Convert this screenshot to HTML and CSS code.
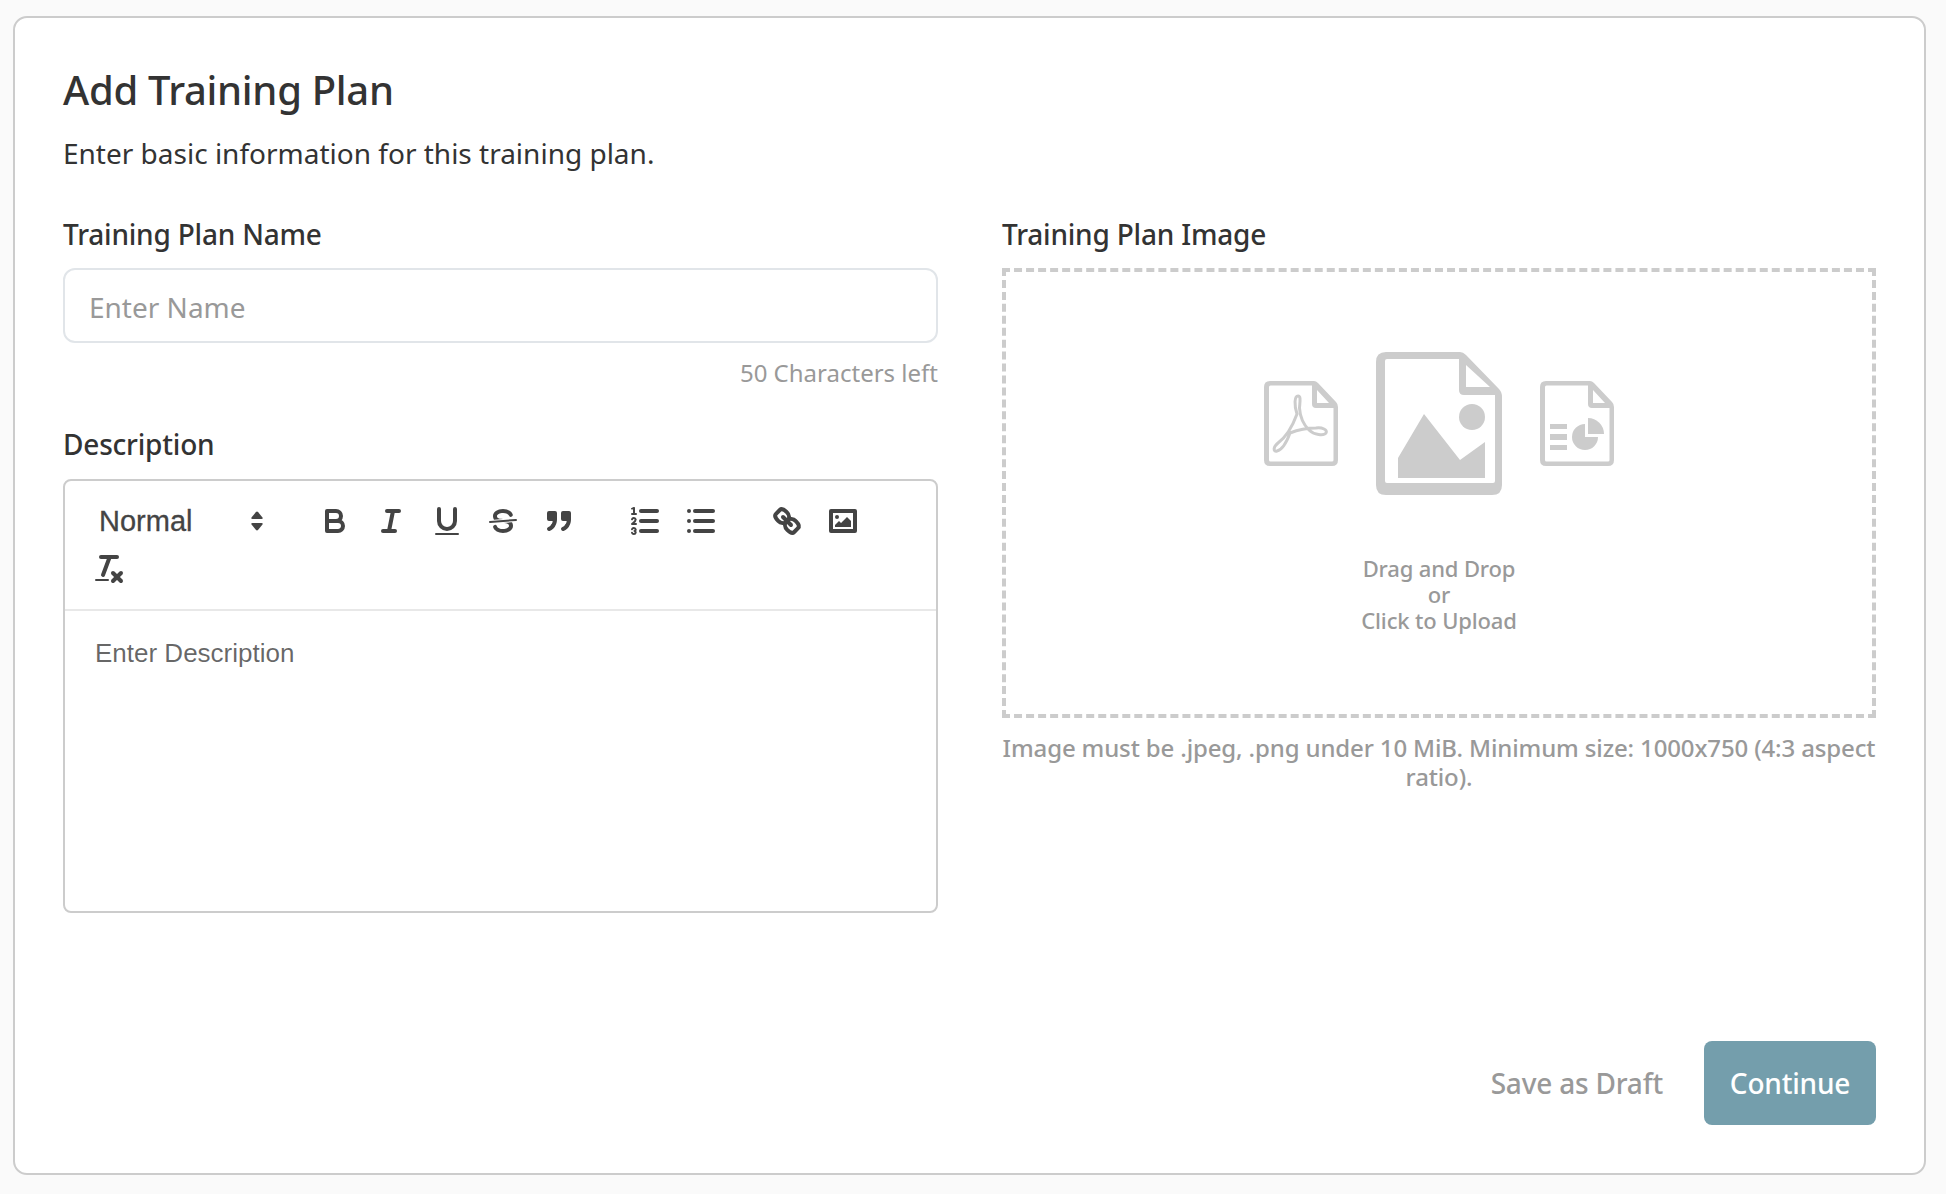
FILE: index.html
```html
<!DOCTYPE html>
<html lang="en">
<head>
    <meta charset="UTF-8">
    <title>Add Training Plan</title>
    <link rel="stylesheet" href="styles.css">
</head>
<body>
    <main class="card">
        <h1 class="title">Add Training Plan</h1>
        <p class="subtitle">Enter basic information for this training plan.</p>

        <div class="columns">
            <section class="column">
                <label class="field-label">Training Plan Name</label>
                <div class="name-input">Enter Name</div>
                <div class="counter">50 Characters left</div>

                <label class="field-label description-label">Description</label>
                <div class="editor">
                    <!-- Toolbar -->
                    <div class="toolbar">
                        <span class="formats">
                            <span class="picker">
                                <span class="picker-label">Normal</span>
                                <svg class="picker-arrows" viewBox="0 0 12 20"><path class="fill" d="M4.800 1.200Q6 -0.200 7.200 1.200L11.300 6.300Q12.500 8 10.500 8H1.500Q-0.500 8 0.700 6.300Z"/><path class="fill" d="M1.500 12H10.500Q12.500 12 11.300 13.700L7.200 18.800Q6 20.200 4.800 18.800L0.700 13.700Q-0.500 12 1.500 12Z"/></svg>
                            </span>
                        </span>
                        <span class="formats">
                            <button class="tool"><svg viewBox="0 0 18 18"><path class="stroke" d="M5,4H9.5A2.5,2.5,0,0,1,12,6.5v0A2.5,2.5,0,0,1,9.5,9H5V4Z"/><path class="stroke" d="M5,9h5.5A2.5,2.5,0,0,1,13,11.5v0A2.5,2.5,0,0,1,10.5,14H5V9Z"/></svg></button>
                            <button class="tool"><svg viewBox="0 0 18 18"><line class="stroke" x1="7" x2="13" y1="4" y2="4"/><line class="stroke" x1="5" x2="11" y1="14" y2="14"/><line class="stroke" x1="8" x2="10" y1="14" y2="4"/></svg></button>
                            <button class="tool"><svg viewBox="0 0 18 18"><path class="stroke" d="M5,3V9a4.012,4.012,0,0,0,4,4H9a4.012,4.012,0,0,0,4-4V3"/><rect class="fill" height="1" rx="0.5" ry="0.5" width="12" x="3" y="15"/></svg></button>
                            <button class="tool"><svg viewBox="0 0 18 18"><line class="stroke thin" x1="15.5" x2="2.5" y1="8.5" y2="9.5"/><path class="fill" d="M9.007,8C6.542,7.791,6,7.519,6,6.5,6,5.792,7.283,5,9,5c1.571,0,2.765.679,2.969,1.309a1,1,0,0,0,1.9-.617C13.356,4.106,11.354,3,9,3,6.2,3,4,4.538,4,6.5a3.2,3.2,0,0,0,.5,1.843Z"/><path class="fill" d="M8.984,10C11.457,10.208,12,10.479,12,11.5c0,.708-1.283,1.5-3,1.5-1.571,0-2.765-.679-2.969-1.309a1,1,0,1,0-1.9.617C4.644,13.894,6.646,15,9,15c2.8,0,5-1.538,5-3.5a3.2,3.2,0,0,0-.5-1.843Z"/></svg></button>
                            <button class="tool"><svg viewBox="0 0 18 18"><rect class="fill stroke" height="3" width="3" x="4" y="5"/><rect class="fill stroke" height="3" width="3" x="11" y="5"/><path class="fill stroke" d="M7,8c0,4.031-3,5-3,5"/><path class="fill stroke" d="M14,8c0,4.031-3,5-3,5"/></svg></button>
                        </span>
                        <span class="formats">
                            <button class="tool"><svg viewBox="0 0 18 18"><line class="stroke" x1="7" x2="15" y1="4" y2="4"/><line class="stroke" x1="7" x2="15" y1="9" y2="9"/><line class="stroke" x1="7" x2="15" y1="14" y2="14"/><line class="stroke thin" x1="2.5" x2="4.5" y1="5.5" y2="5.5"/><path class="fill" d="M3.5,6A0.5,0.5,0,0,1,3,5.5V3.085l-0.276.138A0.5,0.5,0,0,1,2.053,3c-0.124-.247-0.023-0.324.224-0.447l1-.5A0.5,0.5,0,0,1,4,2.5v3A0.5,0.5,0,0,1,3.5,6Z"/><path class="stroke thin" d="M4.5,10.5h-2c0-.234,1.85-1.076,1.85-2.234A0.959,0.959,0,0,0,2.5,8.156"/><path class="stroke thin" d="M2.5,14.846a0.959,0.959,0,0,0,1.85-.109A0.7,0.7,0,0,0,3.75,14a0.688,0.688,0,0,0,.6-0.736,0.959,0.959,0,0,0-1.85-.109"/></svg></button>
                            <button class="tool"><svg viewBox="0 0 18 18"><line class="stroke" x1="6" x2="15" y1="4" y2="4"/><line class="stroke" x1="6" x2="15" y1="9" y2="9"/><line class="stroke" x1="6" x2="15" y1="14" y2="14"/><line class="stroke" x1="3" x2="3" y1="4" y2="4"/><line class="stroke" x1="3" x2="3" y1="9" y2="9"/><line class="stroke" x1="3" x2="3" y1="14" y2="14"/></svg></button>
                        </span>
                        <span class="formats">
                            <button class="tool"><svg viewBox="0 0 18 18"><line class="stroke" x1="7" x2="11" y1="7" y2="11"/><path class="stroke" d="M8.9,4.577a3.476,3.476,0,0,1,.36,4.679A3.476,3.476,0,0,1,4.577,8.9C3.185,7.5,2.5,6.4,3.5,5.4L5.4,3.5C6.4,2.5,7.5,3.185,8.9,4.577Z"/><path class="stroke" d="M13.423,9.1a3.476,3.476,0,0,0-4.679-.36,3.476,3.476,0,0,0,.36,4.679c1.392,1.392,2.5,2.076,3.5,1.076l1.9-1.9C15.5,11.6,14.815,10.5,13.423,9.1Z"/></svg></button>
                            <button class="tool"><svg viewBox="0 0 18 18"><rect class="stroke" height="10" width="12" x="3" y="4"/><circle class="fill" cx="6" cy="7" r="1"/><polyline class="fill" points="5 12 5 11 7 9 8 10 11 7 13 9 13 12 5 12"/></svg></button>
                        </span>
                        <span class="formats">
                            <button class="tool"><svg viewBox="0 0 18 18"><line class="stroke" x1="5" x2="13" y1="3" y2="3"/><line class="stroke" x1="6" x2="9.35" y1="12" y2="3"/><line class="stroke" x1="11" x2="15" y1="11" y2="15"/><line class="stroke" x1="15" x2="11" y1="11" y2="15"/><rect class="fill" height="1" rx="0.5" ry="0.5" width="7" x="2" y="14"/></svg></button>
                        </span>
                    </div>
                    <div class="editor-body">Enter Description</div>
                </div>
            </section>

            <section class="column">
                <label class="field-label">Training Plan Image</label>
                <div class="dropzone">
                    <div class="file-icons">
                        <!-- pdf -->
                        <svg class="file-small" viewBox="0 0 74 85">
                            <path class="file-fill" fill-rule="evenodd" d="M6 0H50Q52 0 54 2L72 21Q74 23 74 26V79Q74 85 68 85H6Q0 85 0 79V6Q0 0 6 0ZM6.500 4.500Q5 4.500 5 6V79Q5 80.500 6.500 80.500H68Q69.500 80.500 69.500 79V27H52Q48 27 48 23V4.500ZM53 9V22H65Z"/>
                            <path class="pdf-line" d="M34 15C30.500 15 30 24 33 33C29 44 22 56 14 62C9 66 9 71 13 70C17 69 22 63 26 52C36 48 46 47 52 47C58 46 64 49 62 52C60 55 50 54 45 49C39 43 36 35 35.500 27C36 20 37 15 34 15Z"/>
                        </svg>
                        <!-- image -->
                        <svg class="file-large" viewBox="0 0 126 143">
                            <path class="file-fill" fill-rule="evenodd" d="M10 0H84Q87 0 90 3L123 37Q126 40 126 45V133Q126 143 116 143H10Q0 143 0 133V10Q0 0 10 0ZM11 7Q9 7 9 9V129Q9 131 11 131H117Q119 131 119 129V43H88Q83 43 83 38V7ZM90 13V35H114Z"/>
                            <path class="file-fill" d="M22 106 48 62 84 108 109 90V126H22Z"/>
                            <circle class="file-fill" cx="96" cy="65" r="13"/>
                        </svg>
                        <!-- presentation -->
                        <svg class="file-small" viewBox="0 0 74 85">
                            <path class="file-fill" fill-rule="evenodd" d="M6 0H50Q52 0 54 2L72 21Q74 23 74 26V79Q74 85 68 85H6Q0 85 0 79V6Q0 0 6 0ZM6.500 4.500Q5 4.500 5 6V79Q5 80.500 6.500 80.500H68Q69.500 80.500 69.500 79V27H52Q48 27 48 23V4.500ZM53 9V22H65Z"/>
                            <path class="file-fill" d="M10 43H27V48H10ZM10 53H27V59H10ZM10 64H27V69H10Z"/>
                            <path class="file-fill" d="M45 43V56H58A13 13 0 1 1 45 43Z"/>
                            <path class="file-fill" d="M48 37A16 16 0 0 1 64 53H48Z"/>
                        </svg>
                    </div>
                    <div class="drop-text">Drag and Drop<br>or<br>Click to Upload</div>
                </div>
                <p class="image-hint">Image must be .jpeg, .png under 10 MiB. Minimum size: 1000x750 (4:3 aspect ratio).</p>
            </section>
        </div>

        <div class="actions">
            <button class="draft-button">Save as Draft</button>
            <button class="continue-button">Continue</button>
        </div>
    </main>
</body>
</html>
```

FILE: styles.css
```css
* {
    box-sizing: border-box;
}

body {
    margin: 0;
    padding: 16px 20px 19px 13px;
    min-height: 100vh;
    display: flex;
    background: #fafafa;
    font-family: "Noto Sans", sans-serif;
    color: #333;
}

.card {
    flex: 1;
    display: flex;
    flex-direction: column;
    padding: 47px 48px 48px 48px;
    background: white;
    border: 2px solid #ccc;
    border-radius: 14px;
}

.title {
    margin: 0;
    font-size: 40px;
    line-height: 50px;
    font-weight: 500;
    letter-spacing: -0.3px;
}

.subtitle {
    margin: 19px 0 0;
    font-size: 28px;
    line-height: 38px;
}

.columns {
    display: grid;
    grid-template-columns: 875px 874px;
    gap: 64px;
    margin-top: 44px;
}

.field-label {
    display: block;
    font-size: 28px;
    line-height: 36px;
    font-weight: 500;
    letter-spacing: -0.2px;
}

.name-input {
    height: 75px;
    margin-top: 16px;
    padding: 0 24px;
    border: 2px solid #e1e5e9;
    border-radius: 12px;
    font-size: 28px;
    line-height: 75px;
    color: #999;
}

.counter {
    margin-top: 14px;
    font-size: 24px;
    line-height: 32px;
    text-align: right;
    color: #999;
}

.description-label {
    margin-top: 37px;
}

.editor {
    height: 434px;
    margin-top: 17px;
    border: 2px solid #ccc;
    border-radius: 8px;
    font-family: "Liberation Sans", Arial, sans-serif;
}

.toolbar {
    display: flex;
    flex-wrap: wrap;
    padding: 16px;
    border-bottom: 2px solid #e8e8e8;
}

.formats {
    display: flex;
    margin-right: 30px;
}

.picker {
    position: relative;
    display: flex;
    align-items: center;
    width: 196px;
    height: 48px;
    padding-left: 18px;
    font-size: 29px;
    color: #444;
    -webkit-text-stroke: 0.3px #444;
}

.picker-arrows {
    position: absolute;
    top: 14px;
    right: 14px;
    width: 12px;
    height: 20px;
}

.tool {
    width: 56px;
    height: 48px;
    padding: 6px 10px;
    border: none;
    background: none;
}

.tool svg {
    display: block;
    width: 36px;
    height: 36px;
}

.stroke {
    fill: none;
    stroke: #444;
    stroke-width: 2;
    stroke-linecap: round;
    stroke-linejoin: round;
}

.stroke.thin {
    stroke-width: 1;
}

.fill {
    fill: #444;
}

.editor-body {
    padding: 24px 30px;
    font-size: 26px;
    line-height: 37px;
    color: rgba(0, 0, 0, 0.6);
}

.dropzone {
    height: 450px;
    margin-top: 16px;
    padding-top: 80px;
    border: 4px dashed #ccc;
    text-align: center;
}

.file-icons {
    display: flex;
    justify-content: center;
    align-items: center;
    gap: 38px;
}

.file-small {
    width: 74px;
    height: 85px;
}

.file-large {
    width: 126px;
    height: 143px;
}

.file-fill {
    fill: #ccc;
}

.pdf-line {
    fill: none;
    stroke: #ccc;
    stroke-width: 3;
}

.drop-text {
    margin-top: 60px;
    font-size: 22px;
    line-height: 26px;
    font-weight: 500;
    letter-spacing: -0.15px;
    color: #999;
}

.image-hint {
    margin: 15px 0 0;
    font-size: 24px;
    line-height: 29px;
    font-weight: 500;
    letter-spacing: -0.14px;
    text-align: center;
    color: #999;
}

.actions {
    display: flex;
    justify-content: flex-end;
    align-items: center;
    gap: 41px;
    margin-top: auto;
}

.draft-button,
.continue-button {
    border: none;
    font-family: "Noto Sans", sans-serif;
    font-size: 28px;
    font-weight: 500;
    letter-spacing: -0.2px;
}

.draft-button {
    padding: 0;
    background: none;
    color: #999;
}

.continue-button {
    width: 172px;
    height: 84px;
    border-radius: 8px;
    background: #749eac;
    color: white;
}
```
